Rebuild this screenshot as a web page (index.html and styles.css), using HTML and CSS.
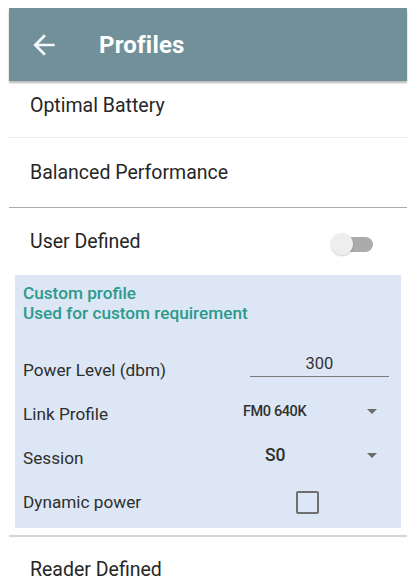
FILE: index.html
```html
<!DOCTYPE html>
<html>
<head>
<meta charset="utf-8">
<link rel="stylesheet" href="styles.css">
</head>
<body>
<div class="screen">
  <header class="appbar">
    <svg class="back" width="32" height="32" viewBox="0 0 24 24"><path d="M20 11H7.83l5.59-5.59L12 4l-8 8 8 8 1.41-1.41L7.83 13H20v-2z" fill="#f4f7f8"/></svg>
    <span class="title">Profiles</span>
  </header>
  <div class="row row-optimal">Optimal Battery</div>
  <div class="row row-balanced">Balanced Performance</div>
  <div class="row row-user">
    <span>User Defined</span>
    <span class="switch"><span class="track"></span><span class="thumb"></span></span>
  </div>
  <div class="panel">
    <div class="desc">
      <div>Custom profile</div>
      <div>Used for custom requirement</div>
    </div>
    <div class="prow">
      <span class="plabel">Power Level (dbm)</span>
      <span class="pinput">300</span>
    </div>
    <div class="prow">
      <span class="plabel">Link Profile</span>
      <span class="pvalue link">FM0 640K</span>
      <span class="caret"></span>
    </div>
    <div class="prow">
      <span class="plabel">Session</span>
      <span class="pvalue session">S0</span>
      <span class="caret"></span>
    </div>
    <div class="prow">
      <span class="plabel">Dynamic power</span>
      <span class="checkbox"></span>
    </div>
  </div>
  <div class="sep"></div>
  <div class="row row-reader">Reader Defined</div>
</div>
</body>
</html>
```

FILE: styles.css
```css
html, body {
  margin: 0;
  padding: 0;
  background: #fff;
}
body {
  font-family: Roboto, "Noto Sans", "Liberation Sans", sans-serif;
  color: #262626;
  overflow: hidden;
}
.screen {
  margin: 0 5px 0 9px;
  padding-top: 8px;
}
.appbar {
  height: 73px;
  background: #71909a;
  box-shadow: 0 2px 2px rgba(0,0,0,0.28);
  display: flex;
  align-items: center;
  position: relative;
}
.back {
  margin-left: 19px;
  margin-top: 0;
  flex: none;
}
.title {
  margin-left: 39px;
  color: #fff;
  font-weight: 700;
  font-size: 24px;
  letter-spacing: 0.2px;
}
.row {
  display: flex;
  align-items: center;
  padding-left: 21px;
  font-size: 19.5px;
  color: #262626;
}
.row-optimal {
  height: 48px;
  padding-bottom: 8px;
  border-bottom: 1px solid #ececec;
}
.row-balanced {
  height: 69px;
  border-bottom: 1px solid #a9a9a9;
}
.row-user {
  height: 67px;
  justify-content: space-between;
  padding-right: 34px;
}
.switch {
  position: relative;
  width: 42px;
  height: 22px;
  margin-top: 4px;
}
.track {
  position: absolute;
  left: 4px;
  right: 0;
  top: 4px;
  height: 15px;
  border-radius: 8px;
  background: #ababab;
}
.thumb {
  position: absolute;
  left: 0;
  top: 0;
  width: 22px;
  height: 22px;
  border-radius: 50%;
  background: #eeeeee;
  box-shadow: 0 1px 2px rgba(0,0,0,0.2);
}
.panel {
  margin: 0 6px;
  height: 253px;
  box-sizing: border-box;
  background: #dde6f4;
  padding: 8px 0 0 8px;
}
.desc {
  color: #2b9a8c;
  font-size: 17.2px;
  font-weight: 500;
  line-height: 20px;
}
.desc + .prow {
  margin-top: 25px;
}
.prow {
  height: 44px;
  display: flex;
  align-items: center;
  font-size: 17.2px;
  color: #2e2e2e;
}
.plabel {
  width: 220px;
  flex: none;
}
.pinput {
  margin-left: 7px;
  width: 139px;
  text-align: center;
  font-size: 16.5px;
  color: #333;
  border-bottom: 1.5px solid #7a7a7a;
  padding-bottom: 3px;
  margin-top: -10px;
}
.pvalue {
  font-weight: 500;
  color: #303030;
}
.link {
  font-size: 14.5px;
  letter-spacing: -0.4px;
  margin-top: -6px;
}
.session {
  font-size: 17.5px;
  margin-left: 22px;
  margin-top: -6px;
}
.caret {
  margin-left: auto;
  margin-right: 24px;
  margin-top: -6px;
  width: 0;
  height: 0;
  border-left: 5px solid transparent;
  border-right: 5px solid transparent;
  border-top: 5px solid #6b6b6b;
}
.checkbox {
  margin-left: 53px;
  width: 19px;
  height: 19px;
  border: 2px solid #6f6f6f;
  border-radius: 2px;
}
.sep {
  margin-top: 7px;
  height: 2px;
  background: #d6d6d6;
}
.row-reader {
  height: 64px;
}
```
